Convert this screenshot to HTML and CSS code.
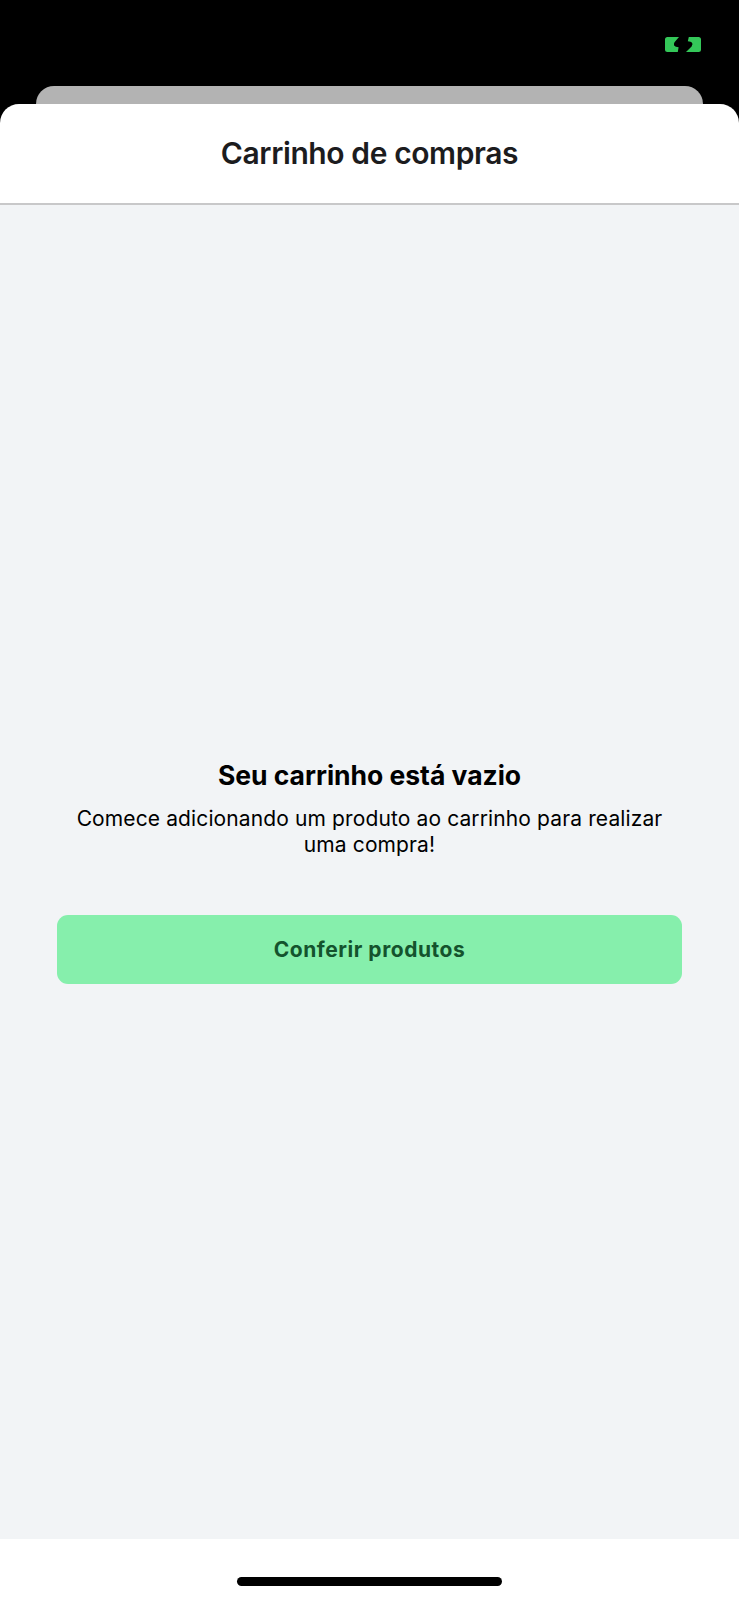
FILE: index.html
```html
<!DOCTYPE html>
<html lang="pt-BR">
<head>
<meta charset="utf-8">
<title>Carrinho de compras</title>
<link rel="stylesheet" href="styles.css">
</head>
<body>
<div class="screen">
  <div class="status-bar">
    <svg class="battery" width="36" height="15" viewBox="0 0 36 15" aria-hidden="true">
      <path fill="#34c759" d="M2.5 0H14L9.5 5.200Q7 9.800 13.600 10.300L12.800 15H2.500Q0 15 0 12.500V2.500Q0 0 2.500 0ZM23.800 0H33.500Q36 0 36 2.500V12.500Q36 15 33.500 15H21L26.600 9.500Q29.500 4.700 22.800 4.300Z"/>
    </svg>
  </div>
  <div class="back-card"></div>
  <main class="sheet">
    <header class="sheet-header"><h1 class="title">Carrinho de compras</h1></header>
    <section class="empty">
      <h2 class="heading">Seu carrinho está vazio</h2>
      <p class="message">Comece adicionando um produto ao carrinho para realizar<br>uma compra!</p>
      <button class="action" type="button"><span>Conferir produtos</span></button>
    </section>
    <footer class="home-area"><div class="home-indicator"></div></footer>
  </main>
</div>
</body>
</html>
```
FILE: styles.css
```css
* { box-sizing: border-box; }
body { margin: 0; background: #000; font-family: Inter, "Liberation Sans", sans-serif; }
h1, h2, p { margin: 0; }
.screen { width: 739px; height: 1600px; display: flex; flex-direction: column; overflow: hidden; }
.status-bar { height: 86px; flex: none; padding: 37px 38px 0 0; display: flex; justify-content: flex-end; align-items: flex-start; }
.battery { display: block; }
.back-card { height: 17.5px; flex: none; margin: 0 36px; background: #b3b3b3; border-radius: 18px 18px 0 0; }
.sheet { flex: 1; display: flex; flex-direction: column; background: #fff; border-radius: 19px 19px 0 0; overflow: hidden; }
.sheet-header { height: 101.5px; flex: none; display: flex; justify-content: center; padding-top: 30.5px; border-bottom: 2px solid #c8c8c9; }
.title { font-size: 30px; line-height: 38px; font-weight: 600; color: #1c1c1e; letter-spacing: -0.4px; white-space: nowrap; }
.empty { flex: 1; display: flex; flex-direction: column; align-items: center; padding: 552px 57px 0; background: #f2f4f6; }
.heading { font-size: 26.5px; line-height: 36px; font-weight: 700; color: #000; letter-spacing: -0.02px; white-space: nowrap; }
.message { margin-top: 13px; font-size: 21px; line-height: 26px; color: #000; text-align: center; letter-spacing: 0.12px; white-space: nowrap; }
.action { margin-top: 57px; width: 625px; height: 69px; padding: 0; border: 0; border-radius: 11px; background: #86efac; color: #14532d; font: 700 21px/26px Inter, "Liberation Sans", sans-serif; letter-spacing: 0.54px; }
.home-area { height: 61px; flex: none; display: flex; justify-content: center; padding-top: 38px; background: #fff; }
.home-indicator { width: 265px; height: 9px; border-radius: 5px; background: #000; }
```
